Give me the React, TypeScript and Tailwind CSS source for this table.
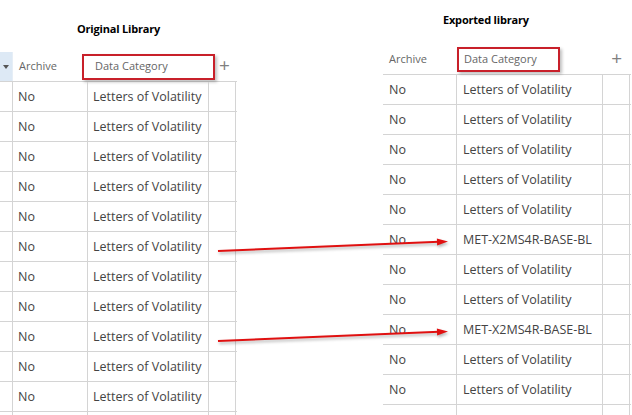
import React from 'react';

const font = { fontFamily: '"Open Sans", "Noto Sans", sans-serif' };

const leftRows = Array(11).fill('Letters of Volatility');
const rightRows = [
  'Letters of Volatility',
  'Letters of Volatility',
  'Letters of Volatility',
  'Letters of Volatility',
  'Letters of Volatility',
  'MET-X2MS4R-BASE-BL',
  'Letters of Volatility',
  'Letters of Volatility',
  'MET-X2MS4R-BASE-BL',
  'Letters of Volatility',
  'Letters of Volatility',
];

const Arrow = ({ x1, y1, x2, y2 }: { x1: number; y1: number; x2: number; y2: number }) => {
  const dx = x2 - x1;
  const dy = y2 - y1;
  const len = Math.sqrt(dx * dx + dy * dy);
  const ux = dx / len;
  const uy = dy / len;
  const bx = x2 - ux * 11;
  const by = y2 - uy * 11;
  const px = -uy * 3.5;
  const py = ux * 3.5;
  return (
    <g>
      <line x1={x1} y1={y1} x2={bx + ux * 2} y2={by + uy * 2} stroke="#e01010" strokeWidth={2} />
      <polygon points={`${x2},${y2} ${bx + px},${by + py} ${bx - px},${by - py}`} fill="#e01010" />
    </g>
  );
};

const App = () => {
  return (
    <div className="relative w-[632px] h-[415px] overflow-hidden bg-white text-[#444]" style={font}>
      <div className="flex">
        {/* Original library */}
        <div className="w-[237px] flex flex-col">
          <div className="h-[52px] flex items-center justify-center pt-[6px] text-[11px] font-bold text-black tracking-[-0.2px]">
            Original Library
          </div>
          <div className="h-[30px] flex items-center border-b border-[#d4d4d4]">
            <div className="w-[13px] h-full bg-[#dde9f5] flex items-center justify-center border-r border-[#e6eef6]">
              <div className="w-0 h-0 border-l-[3.5px] border-r-[3.5px] border-t-[4px] border-l-transparent border-r-transparent border-t-[#555]" />
            </div>
            <div className="w-[69px] pl-[6px] text-[11px] text-[#666]">Archive</div>
            <div className="w-[133px] h-[26px] border-2 border-[#c8202a] shadow-[2px_2px_3px_rgba(0,0,0,0.25)] flex items-center pl-[11px] text-[11px] text-[#666]">
              Data Category
            </div>
            <div className="flex-1 flex items-center pl-[4px] text-[19px] leading-none text-[#808080] pb-[2px]">+</div>
          </div>
          {leftRows.map((text, i) => (
            <div key={i} className="h-[30px] flex border-b border-[#d4d4d4] text-[12.5px]">
              <div className="w-[13px] border-r border-[#d4d4d4]" />
              <div className="w-[75px] border-r border-[#d4d4d4] pl-[5px] flex items-center pt-[1px]">No</div>
              <div className="w-[121px] border-r border-[#d4d4d4] pl-[5px] flex items-center pt-[1px] whitespace-nowrap">{text}</div>
              <div className="w-[27px] border-r border-[#d4d4d4]" />
            </div>
          ))}
          <div className="h-[10px] flex">
            <div className="w-[13px] border-r border-[#d4d4d4]" />
            <div className="w-[75px] border-r border-[#d4d4d4]" />
            <div className="w-[121px] border-r border-[#d4d4d4]" />
            <div className="w-[27px] border-r border-[#d4d4d4]" />
          </div>
        </div>

        {/* Exported library */}
        <div className="ml-[146px] w-[248px] flex flex-col">
          <div className="h-[44px] flex items-start pt-[12px] pl-[60px] text-[11px] font-bold text-black tracking-[-0.2px]">
            Exported library
          </div>
          <div className="h-[31px] flex items-center border-b border-[#d4d4d4]">
            <div className="w-[74px] pl-[6px] text-[11px] text-[#666]">Archive</div>
            <div className="w-[103px] h-[25px] border-2 border-[#c8202a] shadow-[2px_2px_3px_rgba(0,0,0,0.25)] flex items-center pl-[5px] text-[11px] text-[#666]">
              Data Category
            </div>
            <div className="flex-1 flex items-center justify-end pr-[9px] text-[19px] leading-none text-[#808080] pb-[2px]">+</div>
          </div>
          {rightRows.map((text, i) => (
            <div key={i} className="h-[30px] flex border-b border-[#d4d4d4] text-[12.5px]">
              <div className="w-[74px] border-r border-[#d4d4d4] pl-[6px] flex items-center pt-[1px]">No</div>
              <div className="w-[146px] border-r border-[#d4d4d4] pl-[6px] flex items-center pt-[1px] whitespace-nowrap">{text}</div>
              <div className="w-[27px] border-r border-[#d4d4d4]" />
            </div>
          ))}
          <div className="h-[12px] flex">
            <div className="w-[74px] border-r border-[#d4d4d4]" />
            <div className="w-[146px] border-r border-[#d4d4d4]" />
            <div className="w-[27px] border-r border-[#d4d4d4]" />
          </div>
        </div>
      </div>

      {/* Annotation arrows */}
      <svg className="absolute inset-0 pointer-events-none" width={632} height={415} style={{ filter: 'drop-shadow(1px 2px 1.5px rgba(0,0,0,0.3))' }}>
        <Arrow x1={218} y1={251} x2={448} y2={241.5} />
        <Arrow x1={218} y1={341} x2={448} y2={331.5} />
      </svg>
    </div>
  );
};

export default App;
